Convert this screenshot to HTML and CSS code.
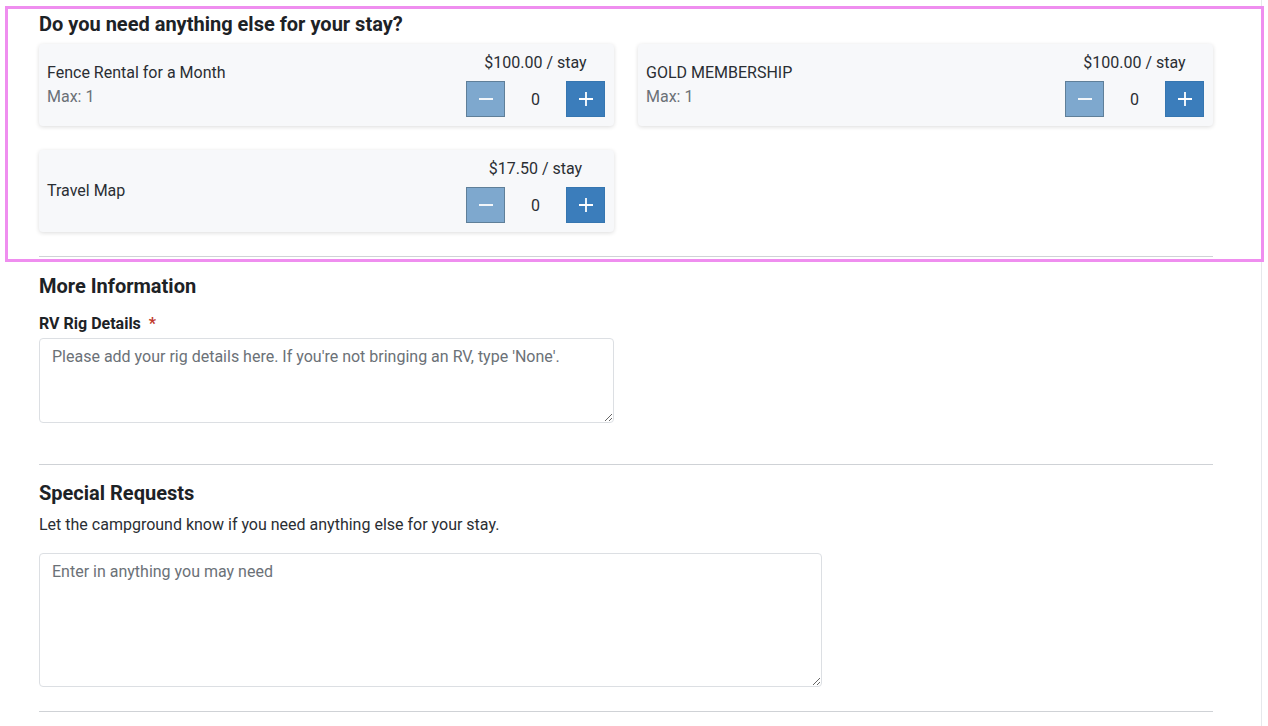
FILE: index.html
```html
<!DOCTYPE html>
<html>
<head>
<meta charset="utf-8">
<link rel="stylesheet" href="styles.css">
</head>
<body>
<div class="page">
  <div class="content">
    <section class="addons">
      <h2 class="addons-title">Do you need anything else for your stay?</h2>
      <div class="addon-grid">
        <div class="addon-card">
          <div class="addon-info">
            <div class="addon-name">Fence Rental for a Month</div>
            <div class="addon-max">Max: 1</div>
          </div>
          <div class="addon-ctrl">
            <div class="addon-price">$100.00 / stay</div>
            <div class="stepper">
              <button class="step minus"><svg width="16" height="16" viewBox="0 0 16 16"><path d="M1 8h14" stroke="#fff" stroke-width="1.8"/></svg></button>
              <span class="qty">0</span>
              <button class="step plus"><svg width="16" height="16" viewBox="0 0 16 16"><path d="M1 8h14M8 1v14" stroke="#fff" stroke-width="1.8"/></svg></button>
            </div>
          </div>
        </div>
        <div class="addon-card">
          <div class="addon-info">
            <div class="addon-name">GOLD MEMBERSHIP</div>
            <div class="addon-max">Max: 1</div>
          </div>
          <div class="addon-ctrl">
            <div class="addon-price">$100.00 / stay</div>
            <div class="stepper">
              <button class="step minus"><svg width="16" height="16" viewBox="0 0 16 16"><path d="M1 8h14" stroke="#fff" stroke-width="1.8"/></svg></button>
              <span class="qty">0</span>
              <button class="step plus"><svg width="16" height="16" viewBox="0 0 16 16"><path d="M1 8h14M8 1v14" stroke="#fff" stroke-width="1.8"/></svg></button>
            </div>
          </div>
        </div>
        <div class="addon-card">
          <div class="addon-info">
            <div class="addon-name">Travel Map</div>
          </div>
          <div class="addon-ctrl">
            <div class="addon-price">$17.50 / stay</div>
            <div class="stepper">
              <button class="step minus"><svg width="16" height="16" viewBox="0 0 16 16"><path d="M1 8h14" stroke="#fff" stroke-width="1.8"/></svg></button>
              <span class="qty">0</span>
              <button class="step plus"><svg width="16" height="16" viewBox="0 0 16 16"><path d="M1 8h14M8 1v14" stroke="#fff" stroke-width="1.8"/></svg></button>
            </div>
          </div>
        </div>
      </div>
    </section>
    <hr class="divider">
    <section class="more">
      <h2 class="section-title">More Information</h2>
      <label class="field-label">RV Rig Details <span class="req">*</span></label>
      <textarea class="rig" placeholder="Please add your rig details here. If you're not bringing an RV, type 'None'."></textarea>
    </section>
    <hr class="divider">
    <section class="special">
      <h2 class="section-title">Special Requests</h2>
      <p class="help">Let the campground know if you need anything else for your stay.</p>
      <textarea class="requests" placeholder="Enter in anything you may need"></textarea>
    </section>
    <hr class="divider">
  </div>
  <div class="highlight"></div>
</div>
</body>
</html>
```

FILE: styles.css
```css
* { box-sizing: border-box; }
html, body { margin: 0; padding: 0; background: #fff; }
body {
  font-family: Roboto, "Liberation Sans", sans-serif;
  color: #212529;
  overflow: hidden;
}
.page {
  position: relative;
  width: 1262px;
  height: 726px;
  border-right: 1px solid #e6e8eb;
}
.content {
  width: 1174px;
  margin-left: 39px;
  padding-top: 12px;
}
.addons-title {
  margin: 0 0 8px 0;
  font-size: 20px;
  font-weight: 700;
  line-height: 24px;
  color: #1d2226;
}
.addon-grid {
  display: grid;
  grid-template-columns: 1fr 1fr;
  column-gap: 24px;
  row-gap: 24px;
}
.addon-card {
  height: 82px;
  background: #f7f8fa;
  border-radius: 4px;
  box-shadow: 0 1px 4px rgba(0,0,0,0.14);
  display: flex;
  justify-content: space-between;
  align-items: center;
  padding: 0 9px 0 8px;
}
.addon-info { display: flex; flex-direction: column; gap: 4px; margin-top: -1px; }
.addon-name { font-size: 16px; line-height: 20px; color: #2a2e33; }
.addon-max { font-size: 16px; line-height: 20px; color: #6b7177; }
.addon-ctrl {
  width: 139px;
  display: flex;
  flex-direction: column;
  align-items: center;
  gap: 8px;
}
.addon-price { font-size: 16px; line-height: 20px; color: #2a2e33; }
.stepper {
  width: 139px;
  display: flex;
  align-items: center;
  justify-content: space-between;
}
.step {
  width: 39px;
  height: 36px;
  padding: 0;
  border: 1px solid #5a7f9f;
  display: flex;
  align-items: center;
  justify-content: center;
}
.step svg { display: block; }
.step.minus { background: #7ea8ce; border-color: #5f7f99; }
.step.plus { background: #3b7dbb; border-color: #3676b0; }
.qty { font-size: 16px; color: #2a2e33; }
.divider {
  border: 0;
  border-top: 1px solid #cfd2d6;
  margin: 0;
}
.addons { padding-bottom: 24px; }
.more { padding-top: 17px; padding-bottom: 41px; }
.section-title {
  margin: 0;
  font-size: 20px;
  font-weight: 700;
  line-height: 24px;
  color: #1d2226;
}
.field-label {
  display: block;
  margin-top: 16px;
  font-size: 16px;
  font-weight: 700;
  line-height: 20px;
  color: #1d2226;
}
.req { color: #c0392b; margin-left: 4px; }
.rig, .requests {
  display: block;
  border: 1px solid #dcdfe3;
  border-radius: 4px;
  padding: 8px 12px;
  font-family: Roboto, "Liberation Sans", sans-serif;
  font-size: 16px;
  line-height: 20px;
  color: #212529;
  resize: vertical;
}
.rig::placeholder, .requests::placeholder { color: #6b7177; }
.rig { width: 575px; height: 85px; margin-top: 4px; }
.special { padding-top: 16px; padding-bottom: 24px; }
.help { margin: 10px 0 0 0; font-size: 16px; line-height: 20px; color: #2a2e33; }
.requests { width: 783px; height: 134px; margin-top: 18px; }
.highlight {
  position: absolute;
  left: 5px;
  top: 6px;
  width: 1259px;
  height: 256px;
  border: 3px solid #ef8eef;
  pointer-events: none;
}
```
